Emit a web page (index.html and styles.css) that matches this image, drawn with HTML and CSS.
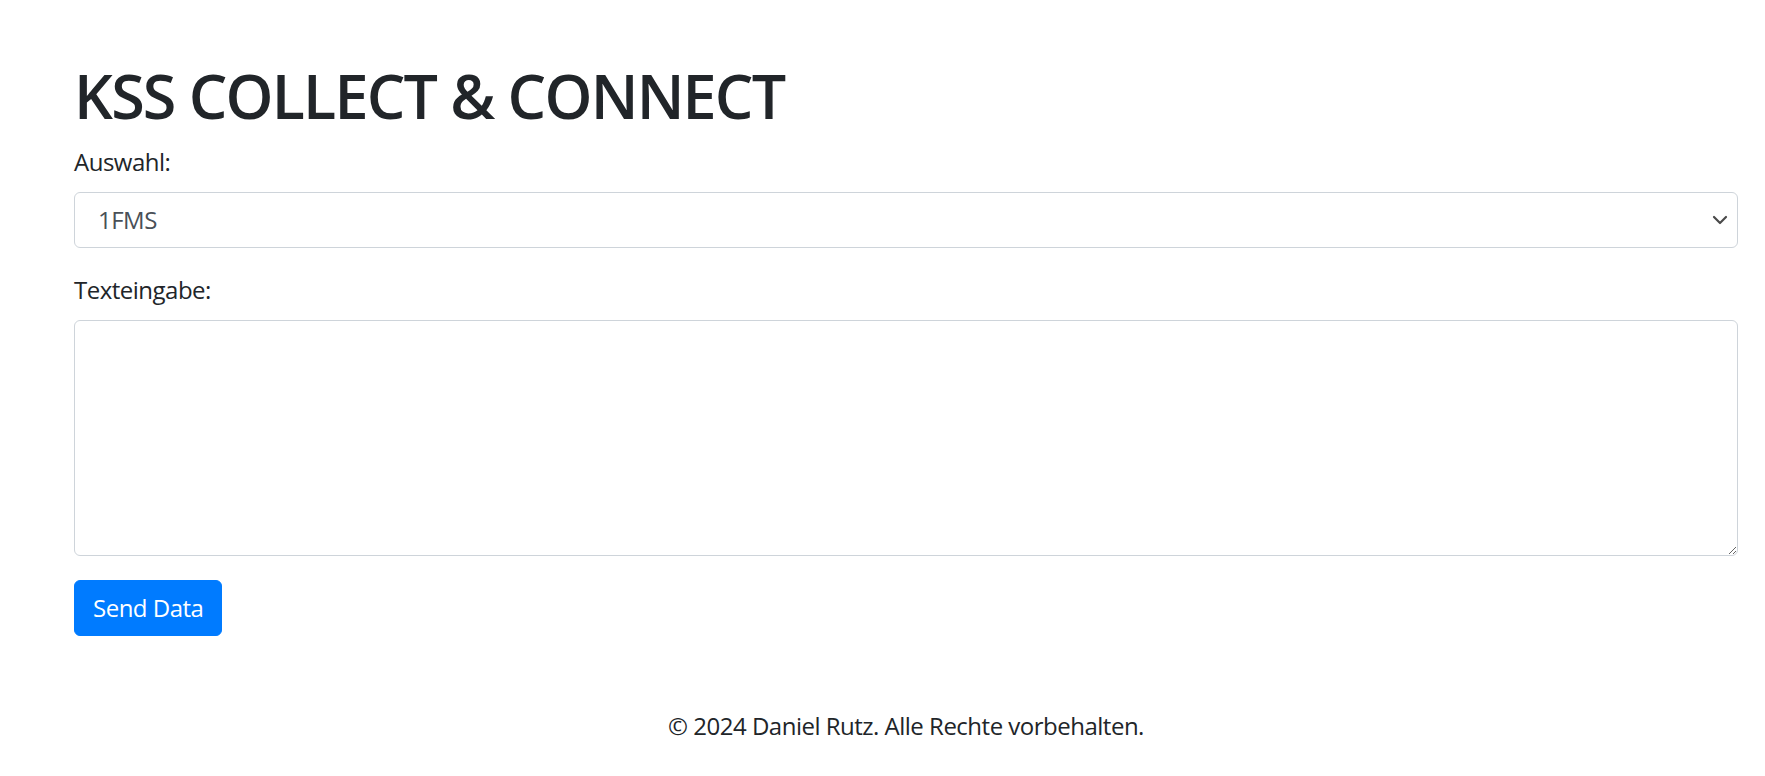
FILE: index.html
```html
<!DOCTYPE html>
<html lang="de">
<head>
<meta charset="utf-8">
<title>KSS Collect &amp; Connect</title>
<link rel="stylesheet" href="styles.css">
</head>
<body>
<div class="container">
  <h1 class="title">KSS COLLECT &amp; CONNECT</h1>
  <form class="form">
    <div class="form-group">
      <label class="label" for="auswahl">Auswahl:</label>
      <div class="select-wrap">
        <select id="auswahl" class="control select">
          <option>1FMS</option>
        </select>
        <svg class="chevron" width="16" height="10" viewBox="0 0 16 10" aria-hidden="true"><path d="M2 2 L8 8 L14 2" fill="none" stroke="#4a4a4a" stroke-width="2.2" stroke-linecap="round" stroke-linejoin="round"/></svg>
      </div>
    </div>
    <div class="form-group">
      <label class="label" for="text">Texteingabe:</label>
      <textarea id="text" class="control textarea" rows="6"></textarea>
    </div>
    <button type="button" class="btn">Send Data</button>
  </form>
  <footer class="footer">© 2024 Daniel Rutz. Alle Rechte vorbehalten.</footer>
</div>
</body>
</html>
```

FILE: styles.css
```css
* { box-sizing: border-box; }
html, body { margin: 0; padding: 0; background: #fff; }
body {
  font-family: "Open Sans", "Noto Sans", "Liberation Sans", sans-serif;
  font-size: 24px;
  line-height: 1.5;
  letter-spacing: -0.5px;
  color: #212529;
}
.container {
  padding: 59px 27px 0 74px;
}
.title {
  font-size: 61px;
  font-weight: 600;
  line-height: 1.2;
  letter-spacing: -1.8px;
  margin: 0 0 12px 0;
}
.form { margin: 0; }
.form-group { margin-bottom: 24px; }
.label {
  display: inline-block;
  margin-bottom: 12px;
}
.control {
  display: block;
  width: 100%;
  font-family: inherit;
  font-size: 24px;
  line-height: 1.5;
  letter-spacing: -0.5px;
  color: #495057;
  background: #fff;
  border: 1px solid #ced4da;
  border-radius: 6px;
  padding: 9px 18px;
  margin: 0;
}
.select-wrap { position: relative; }
.select {
  height: 56px;
  appearance: none;
  -webkit-appearance: none;
  padding-left: 23px;
}
.chevron {
  position: absolute;
  right: 10px;
  top: 23px;
  pointer-events: none;
}
.textarea {
  height: 236px;
  resize: vertical;
}
.btn {
  display: inline-block;
  font-family: inherit;
  font-size: 24px;
  line-height: 1.5;
  letter-spacing: -0.5px;
  color: #fff;
  background: #007bff;
  border: 1px solid #007bff;
  border-radius: 6px;
  padding: 9px 18px;
  height: 56px;
}
.footer {
  margin-top: 72px;
  text-align: center;
}
```
